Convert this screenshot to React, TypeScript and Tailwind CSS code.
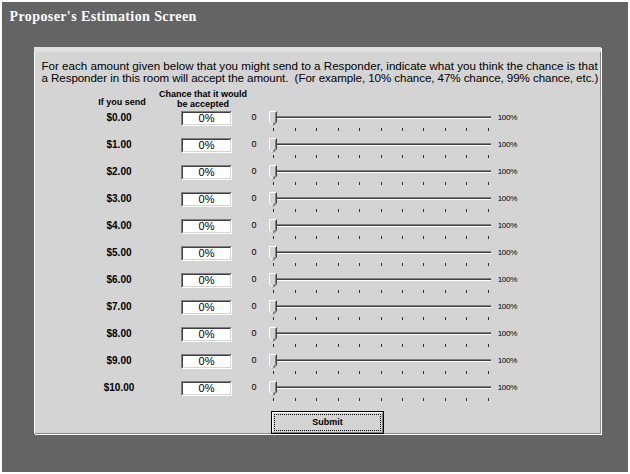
const amounts = ['$0.00', '$1.00', '$2.00', '$3.00', '$4.00', '$5.00', '$6.00', '$7.00', '$8.00', '$9.00', '$10.00'];

const ticks = Array.from({ length: 11 }, (_, i) => 4.3 + i * 21.44);

function Slider() {
  return (
    <svg width={222} height={21} className="block shrink-0">
      <rect x={1} y={5} width={221} height={1} fill="#808080" />
      <rect x={1} y={6} width={221} height={1} fill="#404040" />
      <rect x={1} y={7} width={221} height={1} fill="#ffffff" />
      {ticks.map((t, i) => (
        <rect key={i} x={Math.round(t)} y={17} width={1} height={3} fill="#303030" />
      ))}
      <polygon points="0.5,0.5 7.5,0.5 7.5,11 4,14.5 0.5,11" fill="#d4d4d4" />
      <polyline points="4,14.5 0.5,11 0.5,0.5 7.5,0.5" fill="none" stroke="#ffffff" strokeWidth={1} />
      <polyline points="7.5,0.5 7.5,11 4,14.5" fill="none" stroke="#404040" strokeWidth={1} />
      <polyline points="6.5,1.5 6.5,10.5 4,13" fill="none" stroke="#808080" strokeWidth={1} />
    </svg>
  );
}

function Row({ amount }: { amount: string }) {
  return (
    <div className="flex h-[27px] items-start">
      <div className="ml-[50px] w-[70px] text-center text-[10px] font-bold leading-[13px]">{amount}</div>
      <div className="ml-[27px] h-[15px] w-[51px] border border-t-[#808080] border-l-[#808080] border-r-white border-b-white">
        <div className="h-full w-full border border-t-[#404040] border-l-[#404040] border-r-[#d4d4d4] border-b-[#d4d4d4] bg-white text-center text-[11px] leading-[11px]">
          0%
        </div>
      </div>
      <div className="ml-[19.5px] mt-[0.5px] w-[17.5px] text-[9px] leading-[10px]">0</div>
      <Slider />
      <div className="ml-[6.7px] mt-[2px] text-[8px] leading-[10px] tracking-[-0.3px]">100%</div>
    </div>
  );
}

export default function App() {
  return (
    <div className="h-[474px] w-[630px] bg-white p-[2px] font-['Liberation_Sans',Arial,sans-serif]">
      <div className="h-full w-full bg-[#646464]">
        <div className="h-[45px] pl-[7.5px] pt-[6.8px]">
          <h1 className="font-['Liberation_Serif','Times_New_Roman',serif] text-[14px] font-bold leading-[16px] tracking-[0.4px] text-white">
            Proposer's Estimation Screen
          </h1>
        </div>
        <div className="ml-[32px] h-[387px] w-[567px] bg-[#d4d4d4] text-black shadow-[inset_1px_0_0_#fff,inset_-1px_-1px_0_#8a8a8a,1px_1px_0_#fff]">
          <div className="h-[5px] bg-[#e0e0e0]" />
          <div className="mt-[8px] pl-[7.5px] text-[11.6px] leading-[12px] whitespace-pre">
            <div>For each amount given below that you might send to a Responder, indicate what you think the chance is that</div>
            <div className="tracking-[-0.08px]">a Responder in this room will accept the amount.  (For example, 10% chance, 47% chance, 99% chance, etc.)</div>
          </div>
          <div className="mt-[4.5px] flex items-end text-[9px] font-bold leading-[10px]">
            <div className="ml-[58px] w-[60px] pb-[2px] text-center">If you send</div>
            <div className="w-[102px] text-center">
              <div>Chance that it would</div>
              <div>be accepted</div>
            </div>
          </div>
          <div className="mt-[2.5px]">
            {amounts.map((a) => (
              <Row key={a} amount={a} />
            ))}
          </div>
          <button className="ml-[237px] mt-[-1px] h-[23px] w-[113px] border border-black bg-[#d4d4d4] p-0">
            <div className="h-full w-full border border-t-white border-l-white border-r-[#808080] border-b-[#808080] p-[1px]">
              <div className="flex h-full w-full items-center justify-center border border-dotted border-black text-[9px] font-bold leading-none">
                Submit
              </div>
            </div>
          </button>
        </div>
      </div>
    </div>
  );
}
